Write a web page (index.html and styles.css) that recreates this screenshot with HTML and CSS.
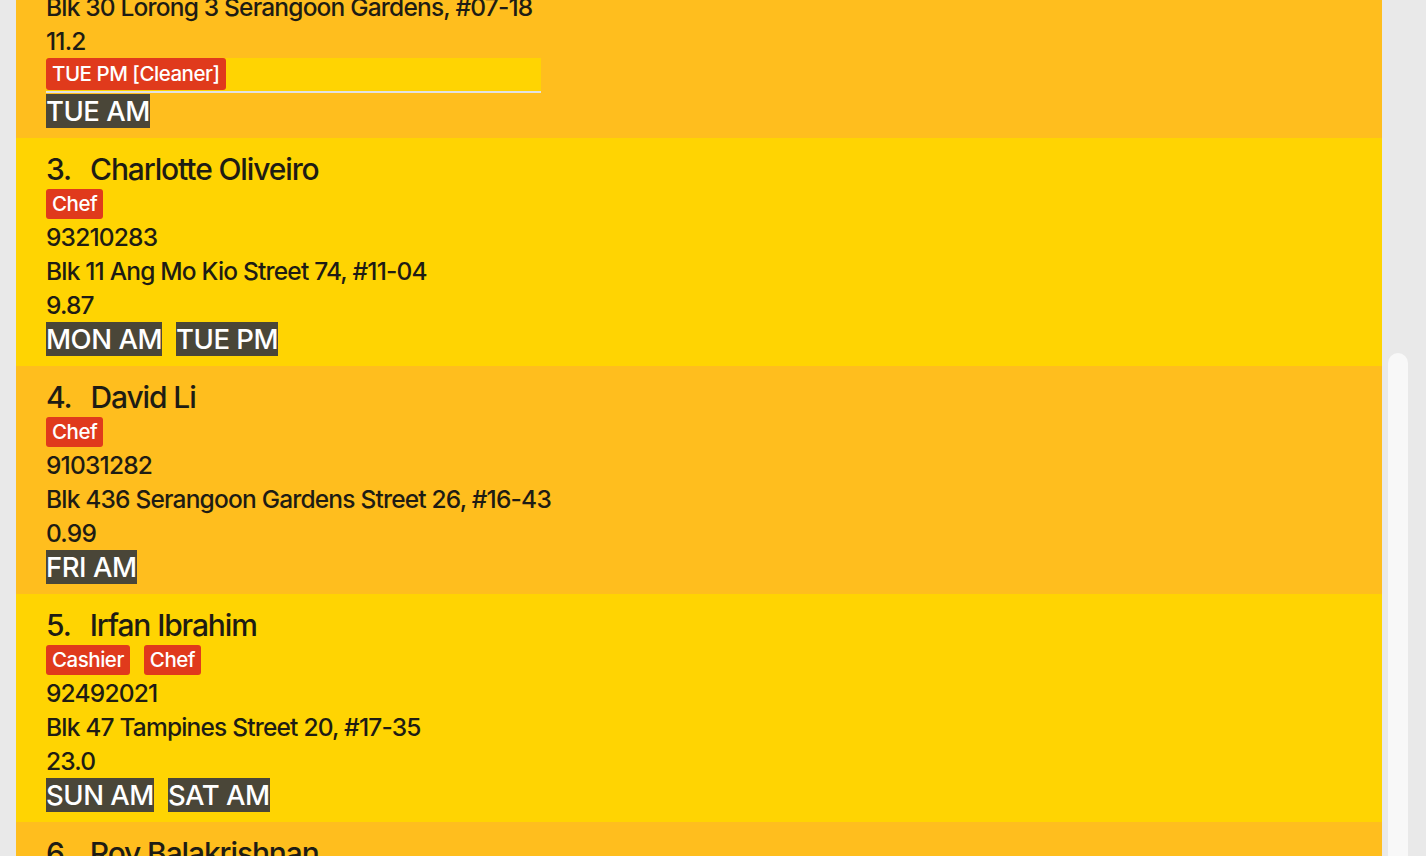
FILE: index.html
```html
<!DOCTYPE html>
<html>
<head>
<meta charset="utf-8">
<link rel="stylesheet" href="styles.css">
</head>
<body>
<div class="app">
  <div class="list">
    <div class="card odd">
      <div class="name-row"><span class="idx">2.</span><span class="name">Bernice Yu</span></div>
      <div class="roles"><span class="role">Cashier</span></div>
      <div class="line">99272758</div>
      <div class="line">Blk 30 Lorong 3 Serangoon Gardens, #07-18</div>
      <div class="line">11.2</div>
      <div class="assign"><span class="role big">TUE PM [Cleaner]</span></div>
      <div class="days"><span class="day">TUE AM</span></div>
    </div>
    <div class="card even">
      <div class="name-row"><span class="idx">3.</span><span class="name">Charlotte Oliveiro</span></div>
      <div class="roles"><span class="role">Chef</span></div>
      <div class="line">93210283</div>
      <div class="line">Blk 11 Ang Mo Kio Street 74, #11-04</div>
      <div class="line">9.87</div>
      <div class="days"><span class="day">MON AM</span><span class="day">TUE PM</span></div>
    </div>
    <div class="card odd">
      <div class="name-row"><span class="idx">4.</span><span class="name">David Li</span></div>
      <div class="roles"><span class="role">Chef</span></div>
      <div class="line">91031282</div>
      <div class="line">Blk 436 Serangoon Gardens Street 26, #16-43</div>
      <div class="line">0.99</div>
      <div class="days"><span class="day">FRI AM</span></div>
    </div>
    <div class="card even">
      <div class="name-row"><span class="idx">5.</span><span class="name">Irfan Ibrahim</span></div>
      <div class="roles"><span class="role">Cashier</span><span class="role">Chef</span></div>
      <div class="line">92492021</div>
      <div class="line">Blk 47 Tampines Street 20, #17-35</div>
      <div class="line">23.0</div>
      <div class="days"><span class="day">SUN AM</span><span class="day">SAT AM</span></div>
    </div>
    <div class="card odd">
      <div class="name-row"><span class="idx">6.</span><span class="name">Roy Balakrishnan</span></div>
      <div class="roles"><span class="role">Cleaner</span></div>
      <div class="line">92624417</div>
      <div class="line">Blk 45 Aljunied Street 85, #11-31</div>
      <div class="line">4.5</div>
      <div class="days"><span class="day">WED PM</span></div>
    </div>
  </div>
  <div class="track"><div class="thumb"></div></div>
</div>
</body>
</html>
```
FILE: styles.css
```css
html, body {
  margin: 0;
  padding: 0;
  height: 856px;
  overflow: hidden;
  background: #e9e9e9;
}
.app {
  display: flex;
  height: 856px;
  font-family: Inter, Roboto, "Liberation Sans", sans-serif;
  font-weight: 450;
  color: #1e1c14;
  letter-spacing: -0.03em;
}
.list {
  width: 1366px;
  margin-left: 16px;
  margin-top: -126px;
  display: flex;
  flex-direction: column;
  flex: none;
}
.card {
  padding: 12px 30px 10px;
  display: flex;
  flex-direction: column;
  align-items: flex-start;
}
.odd { background: #ffbe1e; }
.even { background: #ffd402; }
.name-row {
  display: flex;
  gap: 19px;
  height: 38px;
  line-height: 38px;
  font-size: 30px;
  letter-spacing: -0.0375em;
}
.roles {
  display: flex;
  gap: 14px;
  height: 32px;
  padding-top: 1px;
  box-sizing: border-box;
  align-items: flex-start;
}
.role {
  background: #e03a1c;
  color: #fff;
  font-size: 20.5px;
  height: 30px;
  line-height: 30px;
  padding: 0 6px;
  border-radius: 3px;
}
.line {
  font-size: 24.5px;
  height: 34px;
  line-height: 34px;
  letter-spacing: -0.033em;
}
.assign {
  width: 495px;
  height: 33px;
  background: #ffd402;
  border-bottom: 2px solid #e2e2e2;
  margin-bottom: 1px;
}
.role.big {
  display: inline-block;
  height: 32px;
  line-height: 32px;
  font-size: 20.5px;
}
.days {
  display: flex;
  gap: 14px;
  height: 34px;
}
.day {
  background: #4a4638;
  color: #fff;
  font-size: 27.5px;
  height: 34px;
  line-height: 34px;
}
.track {
  flex: 1;
  padding: 353px 18px 0 6px;
}
.thumb {
  height: 600px;
  background: #f8f8f8;
  border-radius: 10px 10px 0 0;
}
```
